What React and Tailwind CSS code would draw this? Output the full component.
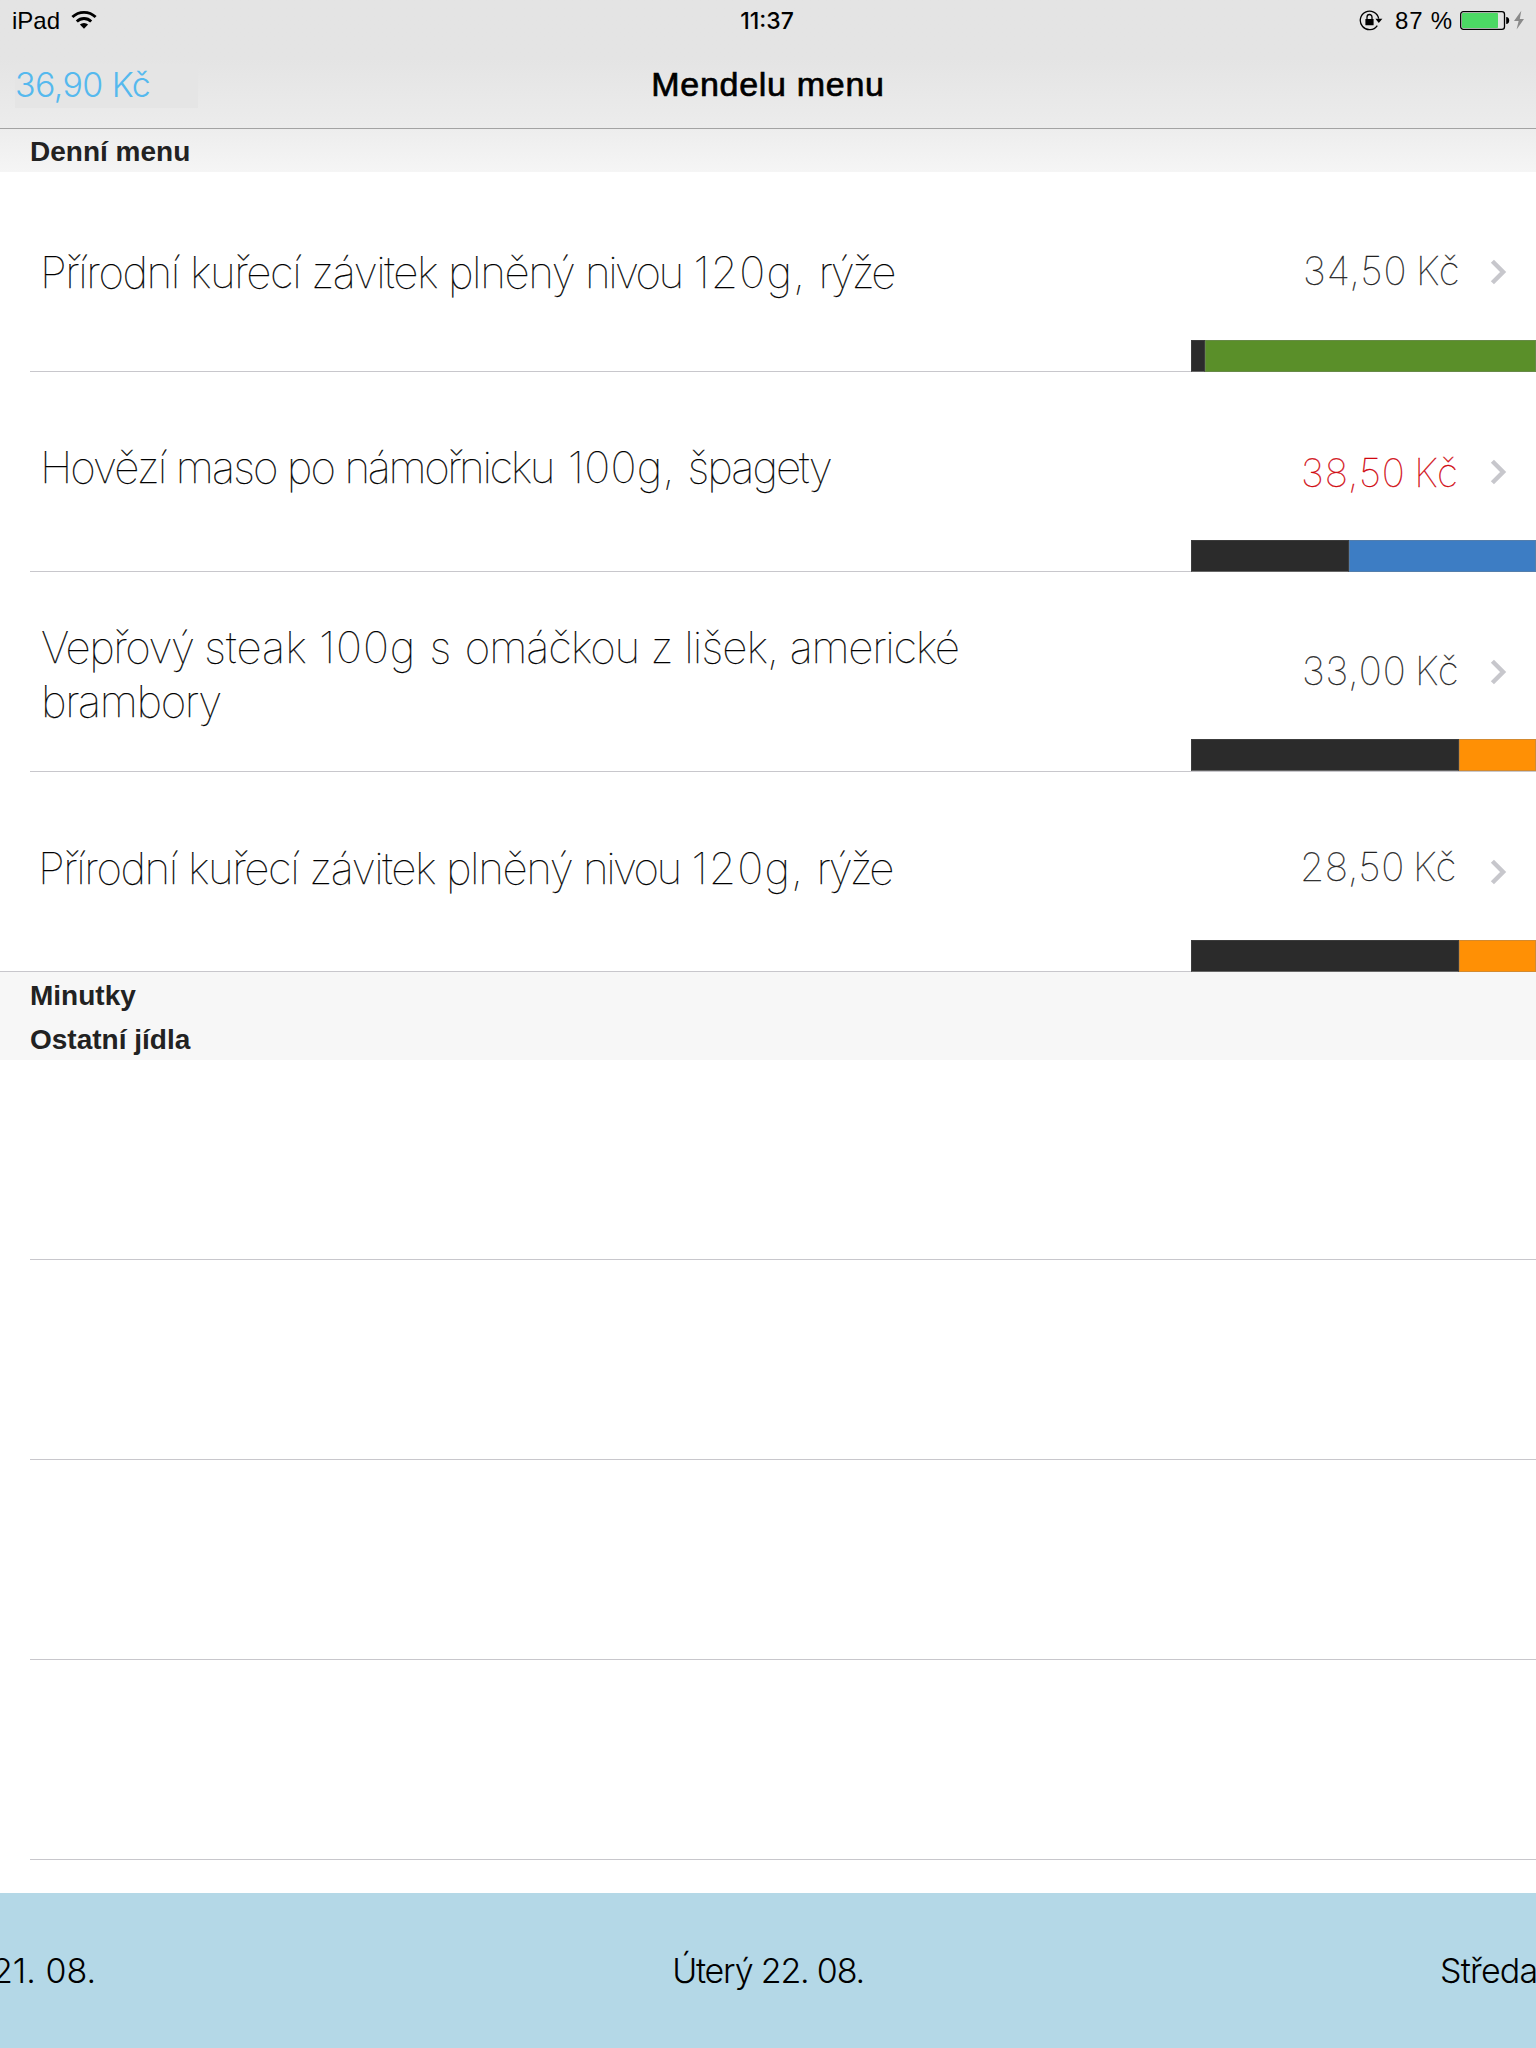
import React from "react";

const chickenRoll = [
  [
    ["Přírodní kuřecí závitek plněný ", "tracking-[-1.42px]"],
    ["nivou", "tracking-[-2.6px]"],
    [" ", "tracking-[-0.5px]"],
    ["120g", "tracking-[1.2px]"],
    [", ", "tracking-[0.5px]"],
    ["rýže", "tracking-[-2.9px]"],
  ],
];

const dishes = [
  {
    lines: chickenRoll,
    price: "34,50 Kč",
    pos: "pt-[73px] pl-[10px]",
    pricePos: "pt-[74px] pl-[1303px] tracking-[1px] text-[#222]",
    dark: 14,
    bar: "bg-[#5a8f29]",
    barPos: "-bottom-px",
  },
  {
    lines: [
      [
        ["Hovězí maso po ", "tracking-[-1.95px]"],
        ["námořnicku", "tracking-[-2.4px]"],
        [" ", "tracking-[2.4px]"],
        ["100g, ", "tracking-[0.3px]"],
        ["špagety", "tracking-[-2px]"],
      ],
    ],
    price: "38,50 Kč",
    pos: "pt-[68px] pl-[10px]",
    pricePos: "pt-[76px] pl-[1301px] tracking-[0.95px] text-[#d0060e]",
    dark: 158,
    bar: "bg-[#3d7dc4]",
    barPos: "-bottom-px",
  },
  {
    lines: [
      [
        ["Vepřový ", "tracking-[-1.47px]"],
        ["steak ", "tracking-[0px]"],
        ["100g ", "tracking-[0.9px]"],
        ["s ", "tracking-[0.6px]"],
        ["omáčkou ", "tracking-[-1.07px]"],
        ["z lišek, ", "tracking-[-0.87px]"],
        ["americké", "tracking-[-1.3px]"],
      ],
      [["brambory", "tracking-[-1.4px]"]],
    ],
    price: "33,00 Kč",
    pos: "pt-[48px] pl-[11px]",
    pricePos: "pt-[74px] pl-[1302px] tracking-[0.9px] text-[#222]",
    dark: 268,
    bar: "bg-[#ff9005]",
    barPos: "bottom-0",
  },
  {
    lines: chickenRoll,
    price: "28,50 Kč",
    pos: "pt-[69px] pl-[8px]",
    pricePos: "pt-[70px] pl-[1300px] tracking-[0.65px] text-[#222]",
    dark: 268,
    bar: "bg-[#ff9005]",
    barPos: "-bottom-px",
  },
];

function Wifi() {
  return (
    <svg className="ml-[11px] mt-[10px] h-5 w-[26px]" viewBox="0 0 26 20" fill="none" stroke="#000" strokeWidth="2.8">
      <path d="M1.4 7.1A16.4 16.4 0 0 1 24.6 7.1" />
      <path d="M5.8 11.5A10.2 10.2 0 0 1 20.2 11.5" />
      <path d="M8.9 14.6A5.8 5.8 0 0 1 17.1 14.6L13 18.8Z" fill="#000" stroke="none" />
    </svg>
  );
}

function RotationLock() {
  return (
    <svg className="mt-[9px] h-[22px] w-6" viewBox="0 0 24 22" fill="none">
      <path d="M18.3 16.6A9.3 9.3 0 1 1 19.7 9.6" stroke="#000" strokeWidth="1.3" />
      <path d="M16.4 9.7H23.4L19.8 14Z" fill="#000" />
      <rect x="6.4" y="10" width="8.2" height="6.2" rx="0.5" fill="#000" />
      <path d="M8 10.4V8.2a2.5 2.7 0 0 1 5 0v2.2" stroke="#000" strokeWidth="1.3" />
    </svg>
  );
}

function Battery() {
  return (
    <svg className="ml-[7px] mt-[10px] h-[22px] w-[66px]" viewBox="0 0 66 22" fill="none">
      <rect x="0.7" y="1.7" width="43.8" height="17.6" rx="2.6" stroke="#000" strokeWidth="1.3" />
      <rect x="2" y="3" width="36" height="15" rx="0.8" fill="#4cd964" />
      <path d="M46.2 7C48.2 7 49.2 8.3 49.2 10.4S48.2 14 46.2 14Z" fill="#000" />
      <path d="M61.3 0.7L54 11H58.6L56.6 19.4L64 9H59.8Z" fill="#8a8a8a" />
    </svg>
  );
}

function Chevron() {
  return (
    <svg className="h-[26px] w-[18px]" viewBox="0 0 18 26" fill="none" stroke="#c7c7cc" strokeWidth="4.4">
      <path d="M3.4 2.3L14.1 13L3.4 23.7" />
    </svg>
  );
}

function DishRow({ dish, last }) {
  return (
    <div className="relative h-[200px]">
      <div className={last ? "h-[200px] border-b border-[#c8c7cc]" : "ml-[30px] h-[200px] border-b border-[#c8c7cc]"}>
        <div className={last ? "ml-[30px]" : ""}>
          <div className={"font-['Inter'] text-[44px] leading-[54px] font-thin whitespace-pre text-black [-webkit-text-stroke:0.25px_#000] " + dish.pos}>
            {dish.lines.map((parts, i) => (
              <div key={i}>
                {parts.map(([text, tracking], j) => (
                  <span key={j} className={tracking}>{text}</span>
                ))}
              </div>
            ))}
          </div>
        </div>
      </div>
      <div className={"absolute top-0 left-0 font-['Inter'] text-[39px] leading-[49px] font-thin whitespace-nowrap [word-spacing:-3.5px] [-webkit-text-stroke:0.3px_currentColor] " + dish.pricePos}>
        {dish.price}
      </div>
      <div className="absolute top-[87px] right-[29.5px]">
        <Chevron />
      </div>
      <div className={"absolute right-0 mb-px flex h-8 w-[345px] " + dish.barPos}>
        <div className="border border-[#3c3c3c] border-b-[#666] bg-[#2b2b2b]" style={{ width: dish.dark }} />
        <div className={"flex-1 border border-[#80808059] " + dish.bar} />
      </div>
    </div>
  );
}

function SectionHeader({ children, className }) {
  return (
    <div className={"flex items-center pl-[30px] font-['Liberation_Sans'] text-[28px] leading-8 font-bold text-[#222] " + className}>
      {children}
    </div>
  );
}

export default function App() {
  return (
    <div className="flex h-[2048px] w-[1536px] flex-col overflow-hidden bg-white">
      <header className="h-[129px] border-b border-[#a3a3a3] bg-linear-to-b from-[#e4e4e4] from-45% to-[#ececec]">
        <div className="grid h-10 grid-cols-3 font-['Liberation_Sans'] text-[24px] leading-7 text-black">
          <div className="flex pl-[12px]">
            <span className="pt-[7px]">iPad</span>
            <Wifi />
          </div>
          <div className="pt-[7px] pr-[2px] text-center font-['Inter'] text-[23px] font-medium">11:37</div>
          <div className="flex justify-end pr-[10px]">
            <RotationLock />
            <span className="ml-[12px] pt-[7px] tracking-[0.8px]">87 %</span>
            <Battery />
          </div>
        </div>
        <div className="grid h-[88px] grid-cols-3 items-center">
          <div className="mt-[4px] ml-[15px] h-[44px] w-[183px] bg-[#e5e5e5] font-['Inter'] text-[34px] leading-[42px] font-light tracking-[-0.6px] whitespace-nowrap text-[#55b9ee]">
            36,90 Kč
          </div>
          <div className="text-center font-['Liberation_Sans'] text-[34px] tracking-[0.7px] text-black [-webkit-text-stroke:0.7px_#000]">
            Mendelu menu
          </div>
          <div />
        </div>
      </header>

      <SectionHeader className="h-[43px] bg-linear-to-b from-[#ededed] to-[#f5f5f5] pt-[2px]">Denní menu</SectionHeader>
      {dishes.map((dish, i) => (
        <DishRow key={i} dish={dish} last={i === dishes.length - 1} />
      ))}
      <SectionHeader className="h-[44px] bg-[#f7f7f7] pt-[4px]">Minutky</SectionHeader>
      <SectionHeader className="h-[44px] bg-[#f7f7f7] pt-[4px]">Ostatní jídla</SectionHeader>

      <div className="h-[833px] shrink-0">
        {[0, 1, 2, 3].map((n) => (
          <div key={n} className="ml-[30px] h-[200px] border-b border-[#c8c7cc]" />
        ))}
      </div>

      <footer className="grid h-[155px] shrink-0 grid-cols-[96px_1fr_96px] items-center overflow-hidden bg-[#b4d8e7] font-['Inter'] text-[34px] font-light whitespace-nowrap text-black">
        <div className="flex justify-end">
          <span>21. 08.</span>
        </div>
        <div className="text-center tracking-[-1.2px]">Úterý 22. 08.</div>
        <div className="tracking-[-0.8px]">Středa</div>
      </footer>
    </div>
  );
}
